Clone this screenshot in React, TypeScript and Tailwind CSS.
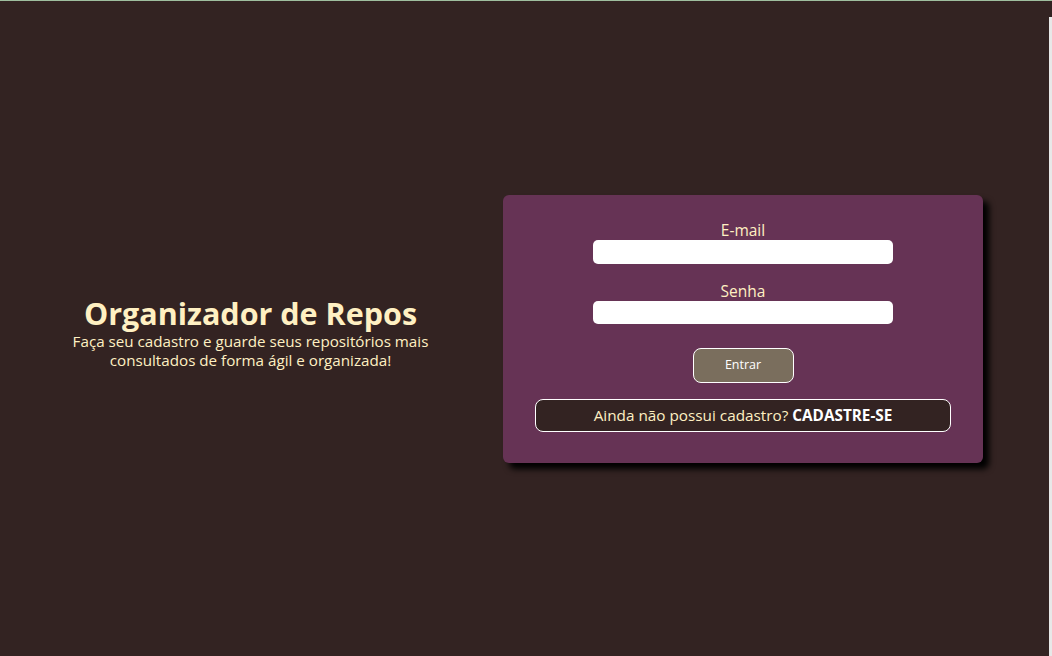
export default function App() {
  return (
    <div className="h-screen w-full bg-[#332322] flex flex-col overflow-hidden font-['Open_Sans','Noto_Sans',sans-serif]">
      <div className="h-px w-full bg-[#9fbf9f]" />
      <div className="flex flex-1">
        <div className="flex flex-1 items-center">
          <div className="w-[501px] mt-[6px] flex flex-col items-center text-center text-[#fff0c2]">
            <h1 className="text-[30.5px] font-bold leading-[38px]">Organizador de Repos</h1>
            <p className="text-[15.2px] leading-[19px] w-[380px]">
              Faça seu cadastro e guarde seus repositórios mais consultados de forma ágil e organizada!
            </p>
          </div>
          <div className="ml-[2px] mt-[1px] w-[480px] bg-[#663355] rounded-[6px] shadow-[6px_6px_6px_#000] flex flex-col items-center pt-[25px] pb-[31px]">
            <label className="text-[15.5px] leading-[20px] text-[#fff0c2]">E-mail</label>
            <input className="w-[300px] h-[24px] bg-white rounded-[5px] outline-none" type="email" />
            <label className="mt-[17px] text-[15.5px] leading-[20px] text-[#fff0c2]">Senha</label>
            <input className="w-[300px] h-[23px] bg-white rounded-[5px] outline-none" type="password" />
            <button className="mt-[24px] w-[101px] h-[35px] bg-[#7a6e5d] border border-white rounded-[8px] text-[12.5px] text-white">
              Entrar
            </button>
            <div className="mt-[16px] w-[416px] h-[33px] bg-[#332322] border border-white rounded-[8px] flex items-center justify-center text-[15.3px] text-[#fff0c2]">
              <span>
                Ainda não possui cadastro? <b className="text-white font-bold">CADASTRE-SE</b>
              </span>
            </div>
          </div>
        </div>
        <div className="w-[3px] mt-[16px] bg-[#e8e8e8]" />
      </div>
    </div>
  );
}
